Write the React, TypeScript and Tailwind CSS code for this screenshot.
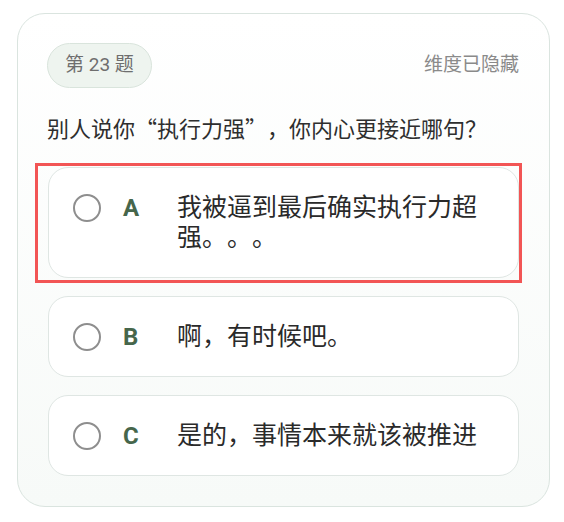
import { useState } from "react"

const options = [
  { key: "A", text: "我被逼到最后确实执行力超强。。。" },
  { key: "B", text: "啊，有时候吧。" },
  { key: "C", text: "是的，事情本来就该被推进" },
]

export default function App() {
  const [picked, setPicked] = useState<string | null>(null)

  return (
    <div className="min-h-[522px] w-[564px] bg-white pt-[13px] pl-[17px] font-['Roboto','Noto_Sans_CJK_SC',sans-serif] [text-spacing-trim:space-all]">
      <div className="w-[533px] h-[494px] rounded-[28px] border-[1.5px] border-[#dae4df] bg-gradient-to-b from-white to-[#f7faf8] px-[29px] pt-[29px]">
        {/* Header row */}
        <div className="flex items-center justify-between">
          <span className="inline-flex h-[45px] items-center rounded-full border border-[#d9e4dc] bg-[#eef4ef] px-[17px] text-[19px] text-[#6e6e6e]">
            第 23 题
          </span>
          <span className="mr-[1px] text-[19px] text-[#8a8a8a]">维度已隐藏</span>
        </div>

        {/* Question */}
        <p className="mt-[24px] font-['Noto_Sans_CJK_SC',sans-serif] text-[22px] leading-[30px] text-[#2e2e2e]">
          别人说你“执行力强”，你内心更接近哪句？
        </p>

        {/* Options */}
        <div className="mt-[25px] flex flex-col gap-[18px] pl-[1px] pr-[1px]">
          {options.map((o, i) => (
            <div key={o.key} className="relative">
              <button
                onClick={() => setPicked(o.key)}
                className="flex w-full items-start rounded-[20px] border border-[#dfe6e3] bg-white py-[24.5px] pl-[24px] pr-[24px] text-left"
              >
                <span className="flex h-[30px] items-center">
                  <span
                    className={
                      picked === o.key
                        ? "h-[28px] w-[28px] rounded-full border-[7px] border-[#46664b]"
                        : "h-[28px] w-[28px] rounded-full border-[2.5px] border-[#8e8e8e]"
                    }
                  />
                </span>
                <span className="ml-[22px] w-[54px] text-[24px] font-bold leading-[30px] text-[#46664b]">
                  {o.key}
                </span>
                <span className="flex-1 text-[25px] leading-[30px] text-[#2a2a2a]">{o.text}</span>
              </button>
              {/* highlight box */}
              {i === 0 && (
                <div className="pointer-events-none absolute -top-[4px] -bottom-[5px] -left-[13px] -right-[3px] border-[3px] border-[#f25555]" />
              )}
            </div>
          ))}
        </div>
      </div>
    </div>
  )
}
